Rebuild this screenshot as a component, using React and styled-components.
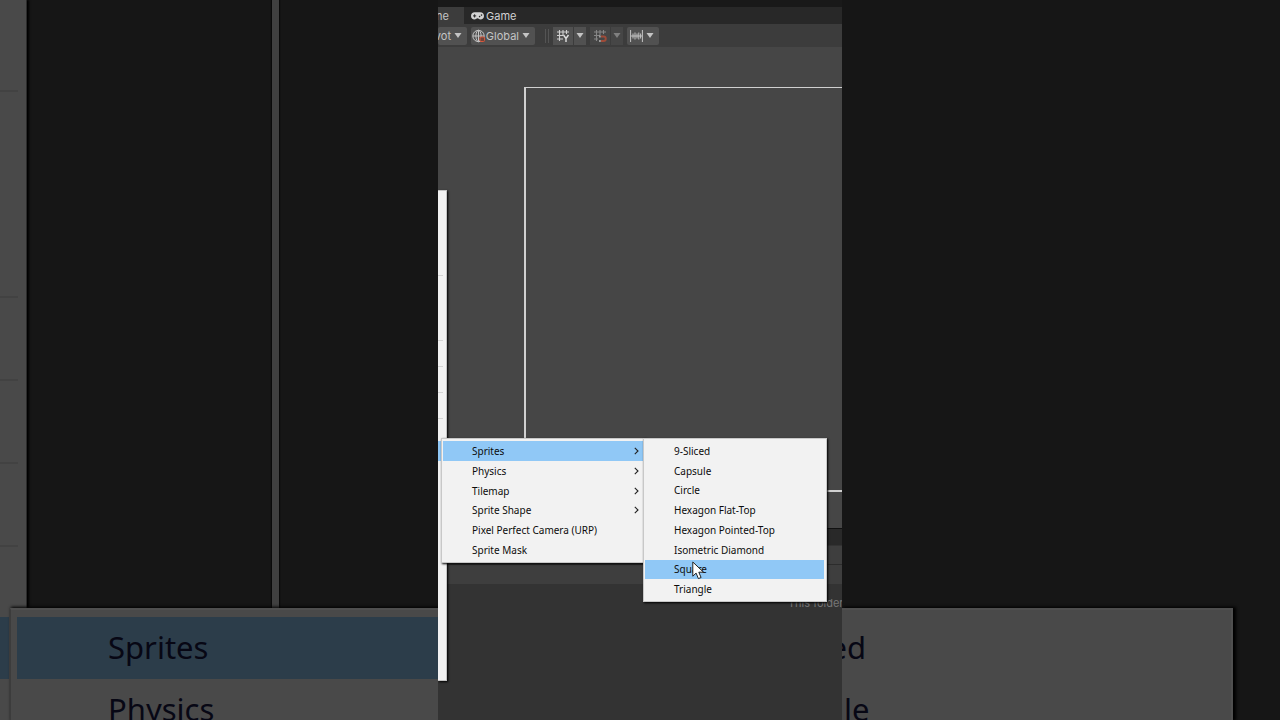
import styled, { createGlobalStyle } from "styled-components";

const GlobalStyle = createGlobalStyle`
  * {
    box-sizing: border-box;
  }
  body {
    margin: 0;
    background-color: #161616;
  }
  button {
    margin: 0;
    padding: 0;
    border: none;
    background: none;
    color: inherit;
    font: inherit;
  }
  svg {
    display: block;
    flex: none;
  }
`;

const Page = styled.div`
  display: grid;
  grid-template-columns: 1fr 404px 1fr;
  height: 100vh;
  min-height: 600px;
  overflow: hidden;
`;

/* enlarged, dimmed sides */

const Side = styled.aside`
  display: flex;
  flex-direction: column;
  min-width: 0;
  overflow: hidden;
  background-color: #161616;
`;

const SideTop = styled.div`
  flex: 1;
  display: flex;
`;

const DimPanel = styled.div`
  display: flex;
  flex-direction: column;
  justify-content: flex-end;
  gap: 81px;
  width: 27px;
  padding: 0 8px 61px 0;
  background-color: #494949;
  border-right: 1px solid #2c2c2c;
  box-shadow: 2px 0 2px #000;
`;

const DimRule = styled.div`
  height: 2px;
  background-color: #424242;
  &:first-child {
    margin-bottom: 123px;
  }
`;

const DimLine = styled.div`
  width: 7px;
  margin-left: 245px;
  background-color: #404040;
  box-shadow: 0 0 1px 1px #0a0a0a;
`;

const SideBottom = styled.div`
  display: flex;
  height: 112px;
`;

const DimEdge = styled.div`
  width: 10px;
  padding: 9px 1px 0 0;
  background-color: #494949;
  &::before {
    content: "";
    display: block;
    height: 62px;
    background-color: #2c3d4a;
  }
`;

const DimMenu = styled.ul`
  flex: 1;
  min-width: 0;
  height: 112px;
  margin: 0 ${(props) => (props.$closed ? "47px" : 0)} 0 0;
  padding: 7px 0 0 ${(props) => (props.$closed ? 0 : "6px")};
  overflow: hidden;
  list-style: none;
  background-color: #494949;
  border-top: 2px solid #4f4f4f;
  border-left: ${(props) => (props.$closed ? "none" : "1px solid #3c3c3c")};
  border-right: ${(props) => (props.$closed ? "2px solid #4f4f4f" : "none")};
  box-shadow: 2px 0 3px 1px #000;
`;

const DimItem = styled.li`
  height: 62px;
  padding-left: ${(props) => (props.$cut ? 0 : "91px")};
  text-indent: ${(props) => (props.$cut ? "-88px" : 0)};
  font: 31px/60px "Noto Sans", sans-serif;
  white-space: nowrap;
  color: #070714;
  background-color: ${(props) => (props.$active ? "#2c3d4a" : "transparent")};
`;

/* editor */

const Editor = styled.main`
  position: relative;
  display: flex;
  flex-direction: column;
  min-width: 0;
  overflow: hidden;
  background-color: #333;
  color: #c4c4c4;
  font: 11px/16px Inter, sans-serif;
`;

const TabBar = styled.div`
  display: flex;
  flex: none;
  height: 24px;
  padding-top: 7px;
  background: linear-gradient(#191919 7px, #282828 7px);
`;

const Tab = styled.button`
  display: flex;
  align-items: center;
  justify-content: flex-end;
  gap: 2px;
  width: ${(props) => (props.$active ? "26px" : "auto")};
  padding: 1px ${(props) => (props.$active ? "15px" : "8px")} 0 7px;
  color: ${(props) => (props.$active ? "#c4c4c4" : "#d2d2d2")};
  background-color: ${(props) => (props.$active ? "#3c3c3c" : "transparent")};
`;

const Toolbar = styled.div`
  display: flex;
  align-items: center;
  flex: none;
  height: 23px;
  gap: 4px;
  background-color: #3c3c3c;
`;

const ToolButton = styled.button`
  display: flex;
  align-items: center;
  justify-content: flex-end;
  height: 18px;
  gap: 3px;
  width: ${(props) => props.$width};
  padding-right: 5px;
  border-radius: 2px;
  background-color: #515151;
`;

const IconLabel = styled.span`
  display: flex;
  align-items: center;
`;

const Split = styled.div`
  display: flex;
  gap: 1px;
  opacity: ${(props) => (props.$disabled ? 0.5 : 1)};
`;

const SplitButton = styled.button`
  display: flex;
  align-items: center;
  justify-content: center;
  width: ${(props) => (props.$caret ? "12px" : "20px")};
  height: 18px;
  background-color: #515151;
`;

const Grip = styled.div`
  width: 4px;
  height: 14px;
  margin-left: 6px;
  border: solid #545454;
  border-width: 0 1px;
`;

const Scene = styled.div`
  display: flex;
  flex: 1;
  padding: 40px 0 36px 86px;
  background-color: #464646;
`;

const CameraFrame = styled.div`
  flex: 1;
  border: 2px solid #d0d0d0;
  border-top-width: 1px;
  border-right: none;
`;

const Dock = styled.div`
  flex: none;
  height: 192px;
  border-top: 1px solid #111;
`;

const DockBar = styled.div`
  height: ${(props) => (props.$tabs ? "17px" : "19px")};
  background-color: ${(props) => (props.$tabs ? "#292929" : "#3e3e3e")};
  border-bottom: 1px solid ${(props) => (props.$tabs ? "#333" : "#2c2c2c")};
  &:last-of-type {
    border-bottom: none;
  }
`;

const EmptyNote = styled.p`
  margin: 11px 0 0 350px;
  white-space: nowrap;
  color: #777;
`;

/* native menus */

const ParentMenu = styled.div`
  position: absolute;
  top: 190px;
  left: 0;
  display: flex;
  flex-direction: column;
  width: 9px;
  height: 491px;
  padding: 84px 3px 0 0;
  background-color: #f2f2f2;
  border: solid #c4c4c4;
  border-width: 1px 1px 1px 0;
  box-shadow: 1px 1px 2px #000;
`;

const Rule = styled.hr`
  width: 100%;
  height: 1px;
  margin: 0 0 25px;
  border: none;
  background-color: #d4d4d4;
  &:first-child {
    margin-bottom: 64px;
  }
`;

const ParentActive = styled.div`
  height: 20px;
  margin-top: -3px;
  background-color: #90c8f6;
`;

const Menu = styled.ul`
  position: absolute;
  top: 438px;
  left: ${(props) => props.$left};
  display: grid;
  grid-auto-rows: 1fr;
  width: ${(props) => props.$width};
  height: ${(props) => props.$height};
  margin: 0;
  padding: 2px 2px 2px 1px;
  list-style: none;
  background-color: #f2f2f2;
  border: 1px solid #c8c8c8;
  box-shadow: 1px 1px 2px #000;
`;

const MenuButton = styled.button`
  display: flex;
  align-items: center;
  justify-content: space-between;
  width: 100%;
  height: 100%;
  padding: 0 4px 0 29px;
  font: 10px/18px "Noto Sans", sans-serif;
  white-space: nowrap;
  color: #0c0c0c;
  background-color: ${(props) => (props.$active ? "#90c8f6" : "transparent")};
`;

const Pointer = styled.svg`
  position: absolute;
  top: 561px;
  left: 254px;
`;

const Caret = () => (
  <svg width="8" height="5" viewBox="0 0 8 5">
    <path d="M.5 0h7L4 5z" fill="#c4c4c4" />
  </svg>
);

const Chevron = () => (
  <svg width="5" height="8" viewBox="0 0 5 8">
    <path d="M.8.8 4 4 .8 7.2" fill="none" stroke="#222" strokeWidth="1.1" />
  </svg>
);

const GamepadIcon = () => (
  <svg width="13" height="8" viewBox="0 0 13 8">
    <path
      d="M3.7.3C1.400.3 0 1.900 0 4s1.400 3.600 3.600 3.600C4.800 7.600 5.200 6.300 6.500 6.300s1.700 1.300 2.900 1.300C11.600 7.600 13 6.100 13 4S11.600.3 9.300.3z"
      fill="#d2d2d2"
    />
    <path d="M2 3.900h3.200M3.600 2.300v3.200" stroke="#282828" />
    <circle cx="8.600" cy="4.600" r=".8" fill="#282828" />
    <circle cx="10.500" cy="3.100" r=".8" fill="#282828" />
  </svg>
);

const GlobeIcon = () => (
  <svg width="14" height="14" viewBox="0 0 14 14">
    <g fill="none" stroke="#c4c4c4">
      <circle cx="6.500" cy="7" r="5.700" />
      <ellipse cx="6.500" cy="7" rx="2.600" ry="5.700" />
      <path d="M1 7h11M6.500 1.500v11" />
    </g>
    <rect x="8" y="8" width="4.500" height="4.500" rx="1" fill="#70453c" stroke="#d8573a" />
  </svg>
);

const GridIcon = () => (
  <svg width="14" height="14" viewBox="0 0 14 14">
    <path
      d="M3.500 1v11M7 1v5M10.500 1v4M1 3h12M1 6.500h6M1 10h6"
      stroke="#d0d0d0"
      strokeWidth="1.100"
    />
    <path
      d="m7.500 6 2.500 3.500L12.500 6M10 9.500V13"
      fill="none"
      stroke="#e0e0e0"
      strokeWidth="1.400"
    />
  </svg>
);

const MagnetGridIcon = () => (
  <svg width="14" height="14" viewBox="0 0 14 14">
    <path
      d="M3.500 1v11M7 1v5M10.500 1v4M1 3h12M1 6.500h6M1 10h4"
      stroke="#d0d0d0"
      strokeWidth="1.100"
    />
    <path
      d="M8 7.500h2.500a2.200 2.200 0 0 1 0 4.500H8"
      fill="none"
      stroke="#ff5a36"
      strokeWidth="1.900"
    />
    <path d="M6 7.500h1.800M6 12h1.800" stroke="#fff" strokeWidth="1.900" />
  </svg>
);

const SnapIcon = () => (
  <svg width="13" height="12" viewBox="0 0 13 12">
    <path
      d="M.6 0v12M12.400 0v12M1 6h11M3 3.500v5M5 2.500v7M7 3.500v5M8.800 2.500v7M10.600 3.500v5"
      stroke="#c4c4c4"
    />
  </svg>
);

const spriteMenu = [
  { label: "Sprites", more: true },
  { label: "Physics", more: true },
  { label: "Tilemap", more: true },
  { label: "Sprite Shape", more: true },
  { label: "Pixel Perfect Camera (URP)" },
  { label: "Sprite Mask" },
];

const shapeMenu = [
  { label: "9-Sliced" },
  { label: "Capsule" },
  { label: "Circle" },
  { label: "Hexagon Flat-Top" },
  { label: "Hexagon Pointed-Top" },
  { label: "Isometric Diamond" },
  { label: "Square" },
  { label: "Triangle" },
];

const ContextMenu = ({ items, active, ...box }) => (
  <Menu {...box}>
    {items.map(({ label, more }) => (
      <li key={label}>
        <MenuButton $active={label === active}>
          {label}
          {more && <Chevron />}
        </MenuButton>
      </li>
    ))}
  </Menu>
);

const App = () => {
  return (
    <>
      <GlobalStyle />
      <Page>
        <Side>
          <SideTop>
            <DimPanel>
              <DimRule />
              <DimRule />
              <DimRule />
              <DimRule />
              <DimRule />
            </DimPanel>
            <DimLine />
          </SideTop>
          <SideBottom>
            <DimEdge />
            <DimMenu>
              <DimItem $active>Sprites</DimItem>
              <DimItem>Physics</DimItem>
            </DimMenu>
          </SideBottom>
        </Side>

        <Editor>
          <TabBar>
            <Tab $active>Scene</Tab>
            <Tab>
              <GamepadIcon />
              Game
            </Tab>
          </TabBar>
          <Toolbar>
            <ToolButton $width="29px">
              Pivot
              <Caret />
            </ToolButton>
            <ToolButton $width="64px">
              <IconLabel>
                <GlobeIcon />
                Global
              </IconLabel>
              <Caret />
            </ToolButton>
            <Grip />
            <Split>
              <SplitButton aria-label="Grid">
                <GridIcon />
              </SplitButton>
              <SplitButton $caret aria-label="Grid options">
                <Caret />
              </SplitButton>
            </Split>
            <Split $disabled>
              <SplitButton disabled aria-label="Grid snapping">
                <MagnetGridIcon />
              </SplitButton>
              <SplitButton $caret disabled aria-label="Grid snapping options">
                <Caret />
              </SplitButton>
            </Split>
            <ToolButton $width="32px" aria-label="Increment snapping">
              <SnapIcon />
              <Caret />
            </ToolButton>
          </Toolbar>
          <Scene>
            <CameraFrame />
          </Scene>
          <Dock>
            <DockBar $tabs />
            <DockBar />
            <DockBar />
            <EmptyNote>This folder is empty</EmptyNote>
          </Dock>

          <ParentMenu>
            <Rule />
            <Rule />
            <Rule />
            <Rule />
            <Rule />
            <ParentActive />
          </ParentMenu>
          <ContextMenu
            items={spriteMenu}
            active="Sprites"
            $left="3px"
            $width="205px"
            $height="125px"
          />
          <ContextMenu
            items={shapeMenu}
            active="Square"
            $left="205px"
            $width="184px"
            $height="164px"
          />
          <Pointer width="13" height="20" viewBox="0 0 13 20">
            <path
              d="M.8 1v14.200l3.300-3.100 2.300 5.500 2.700-1.100-2.300-5.300h4.700z"
              fill="#fff"
              stroke="#222"
            />
          </Pointer>
        </Editor>

        <Side>
          <SideTop />
          <SideBottom>
            <DimMenu $closed>
              <DimItem $cut>9-Sliced</DimItem>
              <DimItem $cut>Capsule</DimItem>
            </DimMenu>
          </SideBottom>
        </Side>
      </Page>
    </>
  );
};

export default App;
